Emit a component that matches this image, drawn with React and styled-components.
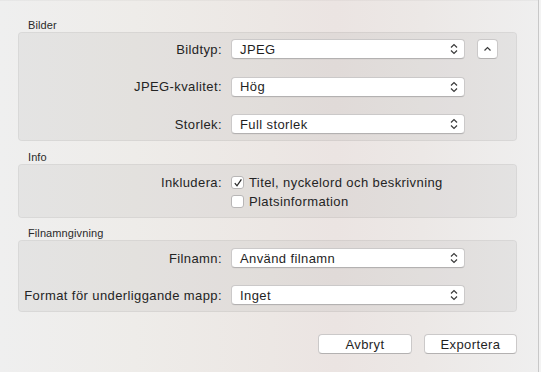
import React from "react";
import styled, { createGlobalStyle } from "styled-components";

const Global = createGlobalStyle`
  html, body { margin: 0; padding: 0; }
  body { font-family: "Liberation Sans", Arial, sans-serif; font-size: 13px; color: #242424; }
`;

const Window = styled.div`
  width: 541px;
  height: 372px;
  display: flex;
  overflow: hidden;
  background: linear-gradient(90deg, #efefef 0%, #eeece9 25%, #ece7e4 50%, #ebe4e2 62%, #ece8e6 78%, #efefef 100%);
`;

const Main = styled.div`
  width: 539px;
  box-sizing: border-box;
  padding: 18px 21px 0 18px;
  display: flex;
  flex-direction: column;
  border-top: 1px solid rgba(0,0,0,0.03);
`;

const Edge = styled.div`
  width: 2px;
  border-left: 1px solid #c8c8c8;
  background: #f3f3f3;
`;

const Section = styled.section`
  display: flex;
  flex-direction: column;
  margin-top: ${(p) => p.$mt || 0}px;
`;

const SectionTitle = styled.div`
  font-size: 11px;
  line-height: 13px;
  height: 13px;
  padding-left: 10px;
  color: #2a2a2a;
  letter-spacing: 0.1px;
`;

const Panel = styled.div`
  border: 1px solid rgba(0, 0, 0, 0.05);
  background: rgba(0, 0, 0, 0.045);
  border-radius: 4px;
  padding: ${(p) => p.$pad};
  display: flex;
  flex-direction: column;
  gap: ${(p) => p.$gap}px;
`;

const Row = styled.div`
  display: grid;
  grid-template-columns: 203px 234px auto;
  column-gap: 9px;
  align-items: center;
  height: ${(p) => p.$h || 20}px;
`;

const Label = styled.div`
  text-align: right;
  white-space: nowrap;
  font-size: 13px;
  letter-spacing: 0.4px;
`;

const Select = styled.div`
  height: 20px;
  box-sizing: border-box;
  background: #ffffff;
  border: 1px solid #cbc9c9;
  border-bottom-color: #b3b1b1;
  border-radius: 4px;
  display: flex;
  align-items: center;
  justify-content: space-between;
  padding: 0 5px 0 8px;
  font-size: 13px;
  letter-spacing: 0.4px;
  color: #1f1f1f;
  box-shadow: 0 0.5px 0 rgba(0,0,0,0.05);
`;

const SquareButton = styled.div`
  width: 21px;
  height: 20px;
  box-sizing: border-box;
  margin-left: 3px;
  background: #ffffff;
  border: 1px solid #cbc9c9;
  border-bottom-color: #b3b1b1;
  border-radius: 4px;
  display: flex;
  align-items: center;
  justify-content: center;
`;

const CheckRow = styled.label`
  display: flex;
  align-items: center;
  gap: 5px;
  white-space: nowrap;
  letter-spacing: 0.4px;
`;

const Box = styled.span`
  width: 13px;
  height: 13px;
  box-sizing: border-box;
  background: #fff;
  border: 1px solid #b8b6b6;
  border-radius: 3px;
  display: flex;
  align-items: center;
  justify-content: center;
`;

const Footer = styled.div`
  display: flex;
  justify-content: flex-end;
  gap: 12px;
  margin-top: 22px;
`;

const Button = styled.div`
  width: ${(p) => p.$w}px;
  height: 20px;
  box-sizing: border-box;
  background: #fff;
  border: 1px solid #cbc9c9;
  border-bottom-color: #b3b1b1;
  border-radius: 4px;
  display: flex;
  align-items: center;
  justify-content: center;
  font-size: 13px;
  letter-spacing: 0.4px;
  color: #1f1f1f;
`;

const Stepper = () => (
  <svg width="10" height="12" viewBox="0 0 10 12">
    <path d="M2 4.5 L5 1.5 L8 4.5" fill="none" stroke="#3a3a3a" strokeWidth="1.2" />
    <path d="M2 7.5 L5 10.5 L8 7.5" fill="none" stroke="#3a3a3a" strokeWidth="1.2" />
  </svg>
);

const Caret = () => (
  <svg width="9" height="6" viewBox="0 0 9 6">
    <path d="M1.5 4.5 L4.5 1.5 L7.5 4.5" fill="none" stroke="#3a3a3a" strokeWidth="1.2" />
  </svg>
);

const Check = () => (
  <svg width="10" height="10" viewBox="0 0 10 10">
    <path d="M1.8 5.2 L4 7.8 L8.4 1.4" fill="none" stroke="#2a2a2a" strokeWidth="1.3" />
  </svg>
);

const SelectField = ({ value }) => (
  <Select>
    <span>{value}</span>
    <Stepper />
  </Select>
);

export default function App() {
  return (
    <>
      <Global />
      <Window>
        <Main>
          <Section>
            <SectionTitle>Bilder</SectionTitle>
            <Panel $pad="6px 0 6px 0" $gap={17.5}>
              <Row>
                <Label>Bildtyp:</Label>
                <SelectField value="JPEG" />
                <SquareButton><Caret /></SquareButton>
              </Row>
              <Row>
                <Label>JPEG-kvalitet:</Label>
                <SelectField value="Hög" />
              </Row>
              <Row>
                <Label>Storlek:</Label>
                <SelectField value="Full storlek" />
              </Row>
            </Panel>
          </Section>

          <Section $mt={10}>
            <SectionTitle>Info</SectionTitle>
            <Panel $pad="8px 0 6px 0" $gap={0}>
              <Row $h={19}>
                <Label>Inkludera:</Label>
                <CheckRow><Box><Check /></Box>Titel, nyckelord och beskrivning</CheckRow>
              </Row>
              <Row $h={19}>
                <Label />
                <CheckRow><Box />Platsinformation</CheckRow>
              </Row>
            </Panel>
          </Section>

          <Section $mt={9}>
            <SectionTitle>Filnamngivning</SectionTitle>
            <Panel $pad="7px 0 6px 0" $gap={17}>
              <Row>
                <Label>Filnamn:</Label>
                <SelectField value="Använd filnamn" />
              </Row>
              <Row>
                <Label>Format för underliggande mapp:</Label>
                <SelectField value="Inget" />
              </Row>
            </Panel>
          </Section>

          <Footer>
            <Button $w={94}>Avbryt</Button>
            <Button $w={93}>Exportera</Button>
          </Footer>
        </Main>
        <Edge />
      </Window>
    </>
  );
}
